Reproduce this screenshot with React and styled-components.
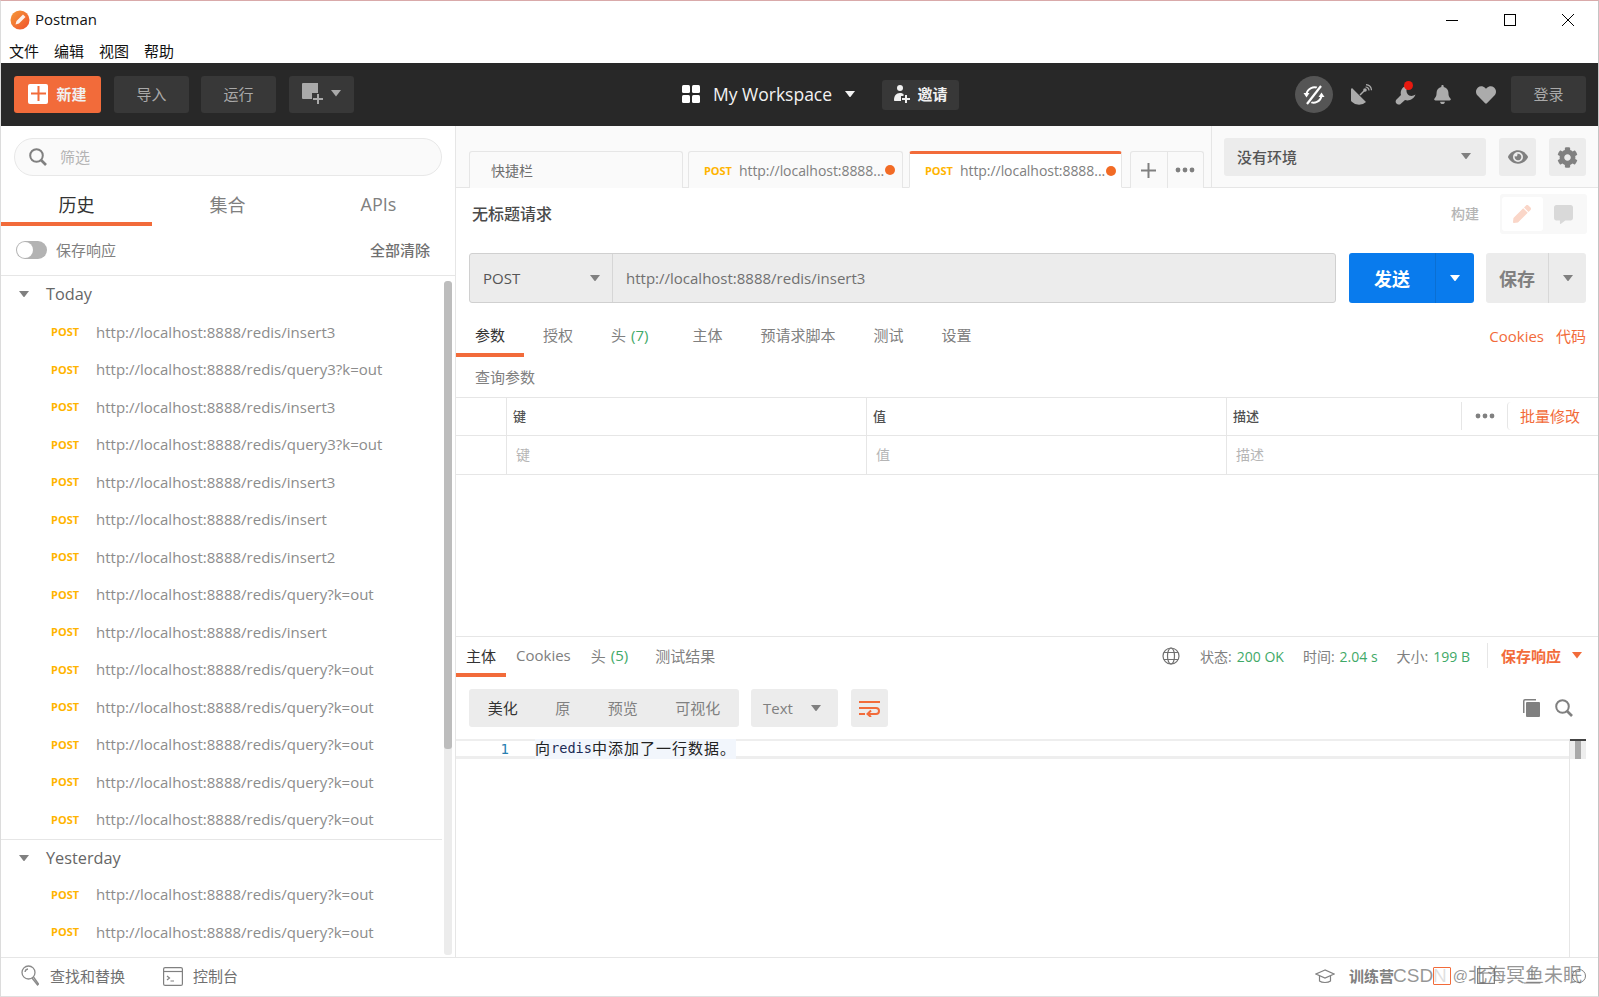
import styled, { createGlobalStyle } from 'styled-components'
import { FaBell, FaHeart, FaCog, FaEye, FaPen, FaCommentAlt } from 'react-icons/fa'

const FONT = `'Open Sans', 'Noto Sans CJK SC', sans-serif`
const ORANGE = '#f26b3a'
const GREEN = '#3fa968'
const LINE = '#e6e6e6'

const GlobalStyle = createGlobalStyle`
  html, body { margin: 0; padding: 0; background: #fff; }
  * { box-sizing: border-box; }
`

const Window = styled.div`
  width: 1599px;
  height: 997px;
  display: flex;
  flex-direction: column;
  overflow: hidden;
  font-family: ${FONT};
  color: #505050;
  background: #fff;
  border-top: 1px solid #d9aaaa;
  border-left: 1px solid #dcdcdc;
  border-right: 1px solid #c4c4c4;
  border-bottom: 1px solid #e0e0e0;
`

const TitleBar = styled.div`
  height: 37px;
  flex: none;
  display: flex;
  align-items: center;
  padding-left: 9px;
  gap: 5px;
  font-size: 15px;
  color: #111;
`

const TitleText = styled.span`
  padding-bottom: 2px;
`

const WindowControls = styled.div`
  margin-left: auto;
  display: flex;
  align-items: center;
  padding-right: 24px;
  gap: 46px;
  color: #000;
`

const MenuBar = styled.div`
  height: 25px;
  flex: none;
  display: flex;
  gap: 15px;
  padding: 3px 0 0 8px;
  font-size: 15px;
  line-height: 20px;
  color: #111;
`

const Header = styled.header`
  height: 63px;
  flex: none;
  display: flex;
  align-items: center;
  background: #282828;
  padding: 0 12px 0 13px;
`

const HeaderLeft = styled.div`
  width: 668px;
  display: flex;
  gap: 12px;
`

const HeaderBtn = styled.div`
  height: ${(p) => p.$h || 37}px;
  width: ${(p) => p.$w}px;
  margin-right: ${(p) => p.$mr || 0}px;
  display: flex;
  align-items: center;
  justify-content: center;
  gap: 8px;
  padding-bottom: 2px;
  border-radius: 3px;
  font-size: 15px;
  color: ${(p) => (p.$light ? '#f0f0f0' : '#a9a9a9')};
  background: ${(p) => (p.$primary ? ORANGE : '#383838')};
  font-weight: ${(p) => (p.$primary || p.$h ? 700 : 400)};
`

const PlusBox = styled.span`
  width: 20px;
  height: 20px;
  background: #fff;
  border-radius: 2px;
  display: flex;
  align-items: center;
  justify-content: center;
`

const WorkspaceName = styled.div`
  display: flex;
  align-items: center;
  color: #f2f2f2;
  font-size: 17.5px;
  gap: 13px;
  padding-bottom: 1px;
  margin-right: 27px;
`

const HeaderRight = styled.div`
  margin-left: auto;
  display: flex;
  align-items: center;
  color: #ababab;
`

const SyncCircle = styled.div`
  width: 38px;
  height: 37px;
  border-radius: 50%;
  background: #555;
  display: flex;
  align-items: center;
  justify-content: center;
  margin-right: 18px;
`

const HeaderIcon = styled.div`
  position: relative;
  width: ${(p) => p.$w}px;
  margin-right: ${(p) => p.$mr}px;
  display: flex;
  justify-content: center;
`

const RedDot = styled.span`
  position: absolute;
  top: -4px;
  right: 3px;
  width: 9px;
  height: 9px;
  border-radius: 50%;
  background: #e8190f;
`

const Body = styled.div`
  flex: 1;
  min-height: 0;
  display: flex;
`

const Sidebar = styled.aside`
  width: 455px;
  flex: none;
  display: flex;
  flex-direction: column;
  border-right: 1px solid ${LINE};
`

const SearchWrap = styled.div`
  margin: 12px 13px 0 13px;
  height: 38px;
  border: 1px solid #e8e8e8;
  border-radius: 19px;
  background: #fafafa;
  display: flex;
  align-items: center;
  padding-left: 14px;
  gap: 13px;
  font-size: 15px;
  color: #b4b4b4;
`

const SearchHint = styled.span`
  padding-bottom: 2px;
`

const SideTabs = styled.div`
  height: 50px;
  flex: none;
  display: flex;
`

const SideTab = styled.div`
  width: 151px;
  display: flex;
  align-items: center;
  justify-content: center;
  padding-top: 9px;
  font-size: 18px;
  color: ${(p) => (p.$active ? '#333' : '#808080')};
  border-bottom: 4px solid ${(p) => (p.$active ? ORANGE : 'transparent')};
`

const ToggleRow = styled.div`
  height: 50px;
  flex: none;
  display: flex;
  align-items: center;
  padding: 0 25px 1px 15px;
  font-size: 15px;
  color: #808080;
  border-bottom: 1px solid ${LINE};
`

const Toggle = styled.span`
  width: 31px;
  height: 18px;
  border-radius: 9px;
  background: #b3b3b3;
  margin-right: 9px;
  display: flex;
  align-items: center;
  padding-left: 1px;
  &::before {
    content: '';
    width: 16px;
    height: 16px;
    border-radius: 50%;
    background: #fff;
  }
`

const ToggleLabel = styled.span`
  padding-bottom: 2px;
`

const ClearAll = styled.span`
  margin-left: auto;
  padding-bottom: 2px;
  font-weight: 500;
  color: #707070;
`

const ListArea = styled.div`
  flex: 1;
  min-height: 0;
  display: flex;
  overflow: hidden;
`

const List = styled.div`
  width: 441px;
  flex: none;
`

const DayHeader = styled.div`
  height: 37.5px;
  display: flex;
  align-items: center;
  padding: 0 0 ${(p) => (p.$divided ? 0 : 2)}px 18px;
  gap: 17px;
  font-size: 16.300px;
  color: #666;
  border-top: ${(p) => (p.$divided ? `1px solid ${LINE}` : 'none')};
`

const HistoryRow = styled.div`
  height: 37.5px;
  display: flex;
  align-items: center;
  padding: 0 0 1px 50px;
  font-size: 15px;
  color: #8c8c8c;
`

const MethodTag = styled.span`
  width: 45px;
  flex: none;
  font-size: 11px;
  font-weight: 700;
  color: #ffb400;
`

const ScrollTrack = styled.div`
  width: 8px;
  margin: 5px 0 2px 2px;
  border-radius: 3px;
  background: #ececec;
  overflow: hidden;
`

const ScrollThumb = styled.div`
  height: 468px;
  background: #bdbdbd;
  border-radius: 3px;
`

const Main = styled.main`
  flex: 1;
  min-width: 0;
  display: flex;
  flex-direction: column;
`

const TabStrip = styled.div`
  height: 62px;
  flex: none;
  display: flex;
  background: #fafafa;
  border-bottom: 1px solid ${LINE};
`

const Tabs = styled.div`
  width: 755px;
  flex: none;
  display: flex;
  align-items: flex-end;
  padding-left: 13px;
  margin-bottom: -1px;
`

const QuickTab = styled.div`
  width: 214px;
  height: 37px;
  margin-right: 5px;
  display: flex;
  align-items: center;
  padding-left: 21px;
  font-size: 14px;
  color: #707070;
  background: #fafafa;
  border: 1px solid ${LINE};
  border-bottom: none;
  border-radius: 3px 3px 0 0;
`

const UrlTab = styled.div`
  width: ${(p) => (p.$active ? 213 : 215)}px;
  height: 37px;
  margin-right: ${(p) => (p.$active ? 8 : 6)}px;
  display: flex;
  align-items: center;
  padding: 0 6px 0 15px;
  font-size: 14px;
  letter-spacing: -0.05px;
  color: #808080;
  background: ${(p) => (p.$active ? '#fff' : '#fafafa')};
  border: 1px solid ${LINE};
  border-top: ${(p) => (p.$active ? `3px solid ${ORANGE}` : `1px solid ${LINE}`)};
  border-bottom: ${(p) => (p.$active ? '1px solid #fff' : 'none')};
  border-radius: 3px 3px 0 0;
`

const TabMethod = styled.span`
  font-size: 11px;
  font-weight: 700;
  color: #ffb400;
  margin-right: 7px;
`

const TabDot = styled.span`
  width: 10px;
  height: 10px;
  border-radius: 50%;
  background: #f26b25;
  margin-left: 1px;
  flex: none;
`

const TabTools = styled.div`
  width: 74px;
  height: 37px;
  display: flex;
  background: #fafafa;
  border: 1px solid ${LINE};
  border-bottom: none;
  border-radius: 3px 3px 0 0;
`

const TabTool = styled.div`
  flex: 1;
  display: flex;
  align-items: center;
  justify-content: center;
  color: #808080;
  & + & { border-left: 1px solid ${LINE}; }
`

const EnvArea = styled.div`
  flex: 1;
  border-left: 1px solid ${LINE};
  display: flex;
  padding: 12px 11px 0 12px;
  gap: 13px;
`

const EnvSelect = styled.div`
  width: 262px;
  height: 38px;
  background: #ececec;
  border-radius: 3px;
  display: flex;
  align-items: center;
  justify-content: space-between;
  padding: 0 15px 2px 13px;
  font-size: 15px;
  font-weight: 500;
  color: #555;
`

const EnvBtn = styled.div`
  width: 37px;
  height: 38px;
  background: #ececec;
  border-radius: 3px;
  display: flex;
  align-items: center;
  justify-content: center;
  color: #808080;
`

const TitleRow = styled.div`
  height: 65px;
  flex: none;
  display: flex;
  align-items: flex-start;
  padding: 6px 11px 0 16px;
`

const RequestName = styled.div`
  margin-top: 8px;
  font-size: 16px;
  font-weight: 500;
  line-height: 24px;
  color: #4a4a4a;
`

const BuildLabel = styled.div`
  margin: 9px 21px 0 auto;
  font-size: 14px;
  line-height: 22px;
  font-weight: 500;
  color: #b5b5b5;
`

const ModeGroup = styled.div`
  width: 87px;
  height: 40px;
  padding: 3px 2px;
  background: #f8f8f8;
  border-radius: 3px;
  display: flex;
`

const ModeCell = styled.div`
  width: 41px;
  display: flex;
  align-items: center;
  justify-content: center;
  border-radius: 3px;
  background: ${(p) => (p.$active ? '#fff' : 'transparent')};
  color: ${(p) => (p.$active ? '#fad6c8' : '#d9d9d9')};
  margin-right: 1px;
`

const UrlRow = styled.div`
  height: 50px;
  flex: none;
  display: flex;
  padding: 0 11px 0 13px;
`

const UrlBar = styled.div`
  width: 867px;
  display: flex;
  background: #ececec;
  border: 1px solid #d0d0d0;
  border-radius: 3px;
  font-size: 15px;
  color: #707070;
`

const MethodSelect = styled.div`
  width: 143px;
  flex: none;
  display: flex;
  align-items: center;
  justify-content: space-between;
  padding: 0 12px 0 13px;
  border-right: 1px solid #d6d6d6;
  color: #555;
`

const UrlText = styled.div`
  display: flex;
  align-items: center;
  padding-left: 13px;
`

const SplitBtn = styled.div`
  width: ${(p) => p.$w}px;
  margin-left: ${(p) => p.$ml}px;
  display: flex;
  border-radius: 3px;
  background: ${(p) => (p.$blue ? '#097bed' : '#ececec')};
  color: ${(p) => (p.$blue ? '#fff' : '#808080')};
  font-size: 18px;
  font-weight: 700;
`

const SplitMain = styled.div`
  flex: 1;
  display: flex;
  align-items: center;
  justify-content: center;
`

const SplitSide = styled.div`
  width: ${(p) => p.$w}px;
  display: flex;
  align-items: center;
  justify-content: center;
  border-left: 1px solid ${(p) => (p.$blue ? '#0a6fd3' : '#d8d8d8')};
`

const TabRow = styled.div`
  height: 54px;
  flex: none;
  display: flex;
  align-items: flex-end;
`

const ReqTab = styled.div`
  height: 54px;
  display: flex;
  align-items: center;
  padding: 13px 19px 0;
  margin-right: ${(p) => p.$mr || 0}px;
  font-size: 15px;
  white-space: nowrap;
  color: ${(p) => (p.$active ? '#333' : '#808080')};
  border-bottom: 4px solid ${(p) => (p.$active ? ORANGE : 'transparent')};
`

const Count = styled.span`
  color: ${GREEN};
  margin-left: 5px;
`

const TabLinks = styled.div`
  margin-left: auto;
  align-self: flex-start;
  padding: 23px 12px 0 0;
  display: flex;
  gap: 12px;
  font-size: 15px;
  line-height: 20px;
  color: ${ORANGE};
`

const SectionLabel = styled.div`
  height: 40px;
  flex: none;
  display: flex;
  align-items: center;
  padding: 0 0 2px 19px;
  font-size: 15px;
  color: #808080;
`

const ParamRow = styled.div`
  height: ${(p) => p.$h}px;
  flex: none;
  display: grid;
  grid-template-columns: 50px 360px 360px 1fr;
  border-top: 1px solid ${LINE};
  border-bottom: ${(p) => (p.$last ? `1px solid ${LINE}` : 'none')};
`

const ParamCell = styled.div`
  display: flex;
  align-items: center;
  padding: 0 0 2px ${(p) => (p.$head ? 6 : 9)}px;
  font-weight: ${(p) => (p.$head ? 500 : 400)};
  font-size: ${(p) => (p.$head ? 13 : 14)}px;
  color: ${(p) => (p.$head ? '#505050' : '#b5b5b5')};
  & + & { border-left: 1px solid ${LINE}; }
`

const ParamTools = styled.div`
  margin-left: auto;
  height: 28px;
  display: flex;
  align-items: center;
  color: #808080;
`

const MoreTools = styled.span`
  width: 46px;
  height: 28px;
  display: flex;
  align-items: center;
  justify-content: center;
  border-left: 1px solid ${LINE};
`

const BulkEdit = styled.span`
  width: 91px;
  padding-left: 12px;
  height: 28px;
  display: flex;
  align-items: center;
  font-size: 15px;
  font-weight: 400;
  color: ${ORANGE};
  border-left: 1px solid ${LINE};
  border-radius: 4px 0 0 4px;
`

const Spacer = styled.div`
  flex: 1;
`

const Response = styled.section`
  height: 321px;
  flex: none;
  display: flex;
  flex-direction: column;
  border-top: 1px solid ${LINE};
`

const RespTop = styled.div`
  height: 40px;
  flex: none;
  display: flex;
  align-items: flex-end;
`

const RespTab = styled.div`
  height: 40px;
  display: flex;
  align-items: center;
  padding: 0 10px;
  margin-right: ${(p) => p.$mr || 0}px;
  font-size: 15px;
  white-space: nowrap;
  color: ${(p) => (p.$active ? '#333' : '#808080')};
  border-bottom: 4px solid ${(p) => (p.$active ? ORANGE : 'transparent')};
`

const Status = styled.div`
  margin-left: auto;
  align-self: stretch;
  display: flex;
  align-items: center;
  padding: 0 16px 3px 0;
  font-size: 14px;
  color: #808080;
`

const Metric = styled.span`
  margin-left: ${(p) => p.$ml}px;
  white-space: nowrap;
`

const MetricValue = styled.span`
  color: ${GREEN};
  margin-left: 5px;
  font-size: 14px;
`

const SaveResp = styled.div`
  margin-left: 17px;
  padding-left: 13px;
  height: 25px;
  display: flex;
  align-items: center;
  gap: 11px;
  font-size: 15px;
  font-weight: 700;
  color: ${ORANGE};
  border-left: 1px solid ${LINE};
`

const RespTools = styled.div`
  height: 38px;
  margin-top: 12px;
  flex: none;
  display: flex;
  padding: 0 25px 0 13px;
`

const Segment = styled.div`
  display: flex;
  align-items: center;
  height: 38px;
  padding-bottom: 2px;
  border-radius: 3px;
  background: #ececec;
  font-size: 15px;
`

const SegItem = styled.span`
  padding: 0 18.750px;
  color: ${(p) => (p.$active ? '#333' : '#808080')};
`

const TextSelect = styled.div`
  margin-left: 12px;
  width: 87px;
  height: 38px;
  padding: 0 17px 0 12px;
  border-radius: 3px;
  background: #ececec;
  display: flex;
  align-items: center;
  justify-content: space-between;
  font-size: 15px;
  color: #808080;
`

const WrapBtn = styled.div`
  margin-left: 13px;
  width: 37px;
  height: 38px;
  border-radius: 3px;
  background: #ececec;
  display: flex;
  align-items: center;
  justify-content: center;
`

const RespIcons = styled.div`
  margin-left: auto;
  display: flex;
  align-items: center;
  gap: 15px;
  color: #808080;
`

const CodeArea = styled.div`
  flex: 1;
  min-height: 0;
  margin-top: 12px;
  display: flex;
  align-items: flex-start;
  padding-right: 12px;
`

const CodeLine = styled.div`
  flex: 1;
  height: 20px;
  display: flex;
  align-items: center;
  border-top: 2px solid #eeeeee;
  border-bottom: 3px solid #eeeeee;
`

const LineNo = styled.span`
  width: 79px;
  flex: none;
  text-align: right;
  padding-right: 26px;
  font-family: 'DejaVu Sans Mono', monospace;
  font-size: 14px;
  color: #2a7fb0;
`

const Code = styled.span`
  width: 201px;
  height: 20px;
  margin: -2px 0 -3px 0;
  padding-bottom: 4px;
  background: #f2f6fc;
  display: flex;
  align-items: center;
  font-size: 15px;
  letter-spacing: 1px;
  color: #222;
`

const CodeLatin = styled.span`
  padding-top: 2px;
  font-family: 'DejaVu Sans Mono', monospace;
  font-size: 13.600px;
  letter-spacing: 0;
  color: #1c2b55;
`

const CodeScroll = styled.div`
  width: 17px;
  flex: none;
  align-self: stretch;
  border-left: 1px solid ${LINE};
`

const CodeScrollHead = styled.div`
  height: 20px;
  background: #eee;
  border-top: 2px solid #444;
  display: flex;
  justify-content: center;
`

const CodeScrollThumb = styled.div`
  width: 6px;
  background: #aaa;
`

const BottomBar = styled.footer`
  position: relative;
  height: 39px;
  flex: none;
  display: flex;
  align-items: center;
  padding: 0 12px 2px 20px;
  font-size: 15px;
  color: #707070;
  border-top: 1px solid ${LINE};
`

const BottomItem = styled.div`
  display: flex;
  align-items: center;
  gap: ${(p) => p.$gap}px;
  margin-right: ${(p) => p.$mr || 0}px;
`

const BottomText = styled.span`
  padding-bottom: 2px;
`

const BottomRight = styled.div`
  margin-left: auto;
  display: flex;
  align-items: center;
  color: #808080;
`

const CampLabel = styled.span`
  margin: 0 83px 0 14px;
  padding-bottom: 2px;
  font-size: 15px;
  font-weight: 700;
`

const Watermark = styled.div`
  position: absolute;
  left: 1392px;
  top: 6px;
  display: flex;
  align-items: center;
  font-family: 'Liberation Sans', 'Noto Sans CJK SC', sans-serif;
  font-size: 19px;
  line-height: 24px;
  color: rgba(110, 110, 110, 0.72);
  white-space: nowrap;
`

const WatermarkBox = styled.span`
  width: 18px;
  height: 18px;
  margin: 0 2px 0 -14px;
  background: rgba(255, 255, 255, 0.7);
  border: 1px solid ${ORANGE};
  border-radius: 1px;
`

const WatermarkAt = styled.span`
  font-size: 15px;
`

const HelpRing = styled.span`
  width: 14px;
  height: 14px;
  margin-left: 31px;
  border: 1px solid #808080;
  border-radius: 50%;
`

const Caret = ({ size = 10, color = '#808080' }) => (
  <svg width={size} height={size * 0.65} viewBox="0 0 10 6.5">
    <path d="M0 0h10L5 6.5z" fill={color} />
  </svg>
)

const Dots = () => (
  <svg width="20" height="6" viewBox="0 0 20 6" fill="currentColor">
    <circle cx="3" cy="3" r="2.4" />
    <circle cx="10" cy="3" r="2.4" />
    <circle cx="17" cy="3" r="2.4" />
  </svg>
)

const PostmanLogo = () => (
  <svg width="20" height="20" viewBox="0 0 20 20">
    <defs>
      <linearGradient id="pm" x1="0" y1="0" x2="1" y2="1">
        <stop offset="0" stopColor="#f59a3a" />
        <stop offset="1" stopColor="#f0502a" />
      </linearGradient>
    </defs>
    <circle cx="10" cy="10" r="9.5" fill="url(#pm)" />
    <path d="M13 4.5l2.5 2.5-6.5 6.5-3.5 1 1-3.5z" fill="#fff" opacity="0.9" />
  </svg>
)

const SyncOff = () => (
  <svg width="22" height="22" viewBox="0 0 22 22" fill="none" stroke="#fff" strokeWidth="2">
    <path d="M15.500 4.500A8 8 0 0 0 3.500 10" />
    <path d="M0.500 9h6l-3 4.500z" fill="#fff" stroke="none" />
    <path d="M6.500 17.500A8 8 0 0 0 18.500 12" />
    <path d="M21.500 13h-6l3-4.500z" fill="#fff" stroke="none" />
    <path d="M18 2L4 20" stroke="#555" strokeWidth="4.500" />
    <path d="M18 2L4 20" strokeWidth="2.200" />
  </svg>
)

const SatelliteIcon = () => (
  <svg width="21" height="21" viewBox="0 0 21 21" fill="#ababab">
    <path d="M1 4l14 14A9.900 9.900 0 0 1 1 4z" />
    <path d="M9 11l4.500-4.500" stroke="#ababab" strokeWidth="1.500" />
    <circle cx="14" cy="6" r="1.800" />
    <path d="M14.500 3a3.500 3.500 0 0 1 3.500 3.500M15 0.700a6 6 0 0 1 5.500 5.500" fill="none" stroke="#ababab" strokeWidth="1.200" />
  </svg>
)

const WrenchIcon = () => (
  <svg width="21" height="20" viewBox="0 0 21 20" fill="#ababab">
    <path d="M11 1C7 2 5 6 6 10L1 15C0 17 1 19 3 19.500L5 19.500L10 15C14 16.500 19 14 20.500 9.500C18 11.500 14 11.500 12.500 9C11 7 11 4 13 1.500z" />
  </svg>
)

const WorkspaceGrid = () => (
  <svg width="18" height="18" viewBox="0 0 18 18" fill="#fff">
    <rect width="8" height="8" rx="1.5" />
    <rect x="10" width="8" height="8" rx="1.5" />
    <rect y="10" width="8" height="8" rx="1.5" />
    <rect x="10" y="10" width="8" height="8" rx="1.5" />
  </svg>
)

const NewWindowIcon = () => (
  <svg width="21" height="21" viewBox="0 0 21 21">
    <path d="M1 0h15v10h-6v6H1a1 1 0 0 1-1-1V1a1 1 0 0 1 1-1z" fill="#a9a9a9" />
    <path d="M15 11v4h-4v2h4v4h2v-4h4v-2h-4v-4z" fill="#a9a9a9" />
  </svg>
)

const InviteIcon = () => (
  <svg width="16" height="18" viewBox="0 0 16 18" fill="#f0f0f0">
    <circle cx="6" cy="3" r="3" />
    <path d="M1 16c-.6 0-1-.4-1-1 0-4 2-7 6-7 1.5 0 2.700.4 3.500 1.100V11H7v5z" />
    <path d="M11 10h2v3h3v2h-3v3h-2v-3H8v-2h3z" />
  </svg>
)

const WrapIcon = () => (
  <svg width="21" height="17" viewBox="0 0 21 17" fill="none" stroke={ORANGE} strokeWidth="2">
    <path d="M0 2h21" />
    <path d="M0 8h17a3 3 0 0 1 0 6H9" />
    <path d="M12 10.500L8.500 14l3.500 3" />
    <path d="M0 14h6" />
  </svg>
)

const CopyIcon = () => (
  <svg width="18" height="18" viewBox="0 0 18 18" fill="#808080">
    <path d="M1 14V2a2 2 0 0 1 2-2h11v1.500H3A.5.5 0 0 0 2.500 2v12z" />
    <rect x="4" y="3" width="14" height="15" rx="1" />
  </svg>
)

const SearchIcon = ({ size = 18 }) => (
  <svg width={size} height={size} viewBox="0 0 18 18" fill="none" stroke="#808080" strokeWidth="2">
    <circle cx="7.500" cy="7.500" r="6.300" />
    <path d="M12 12l5 5" strokeWidth="2.600" />
  </svg>
)

const Globe = () => (
  <svg width="18" height="18" viewBox="0 0 18 18" fill="none" stroke="#707070" strokeWidth="1.200">
    <circle cx="9" cy="9" r="8" />
    <ellipse cx="9" cy="9" rx="3.500" ry="8" />
    <path d="M1.800 5.500h14.400M1.800 12.500h14.400" />
  </svg>
)

const LoupeIcon = () => (
  <svg width="18" height="22" viewBox="0 0 18 22" fill="none" stroke="#8a8a8a" strokeWidth="1.300">
    <circle cx="7.500" cy="7.500" r="6.500" />
    <path d="M4 7a3.500 3.500 0 0 1 3-3" />
    <path d="M11 13l5.500 7 1-1-5-7" />
  </svg>
)

const ConsoleIcon = () => (
  <svg width="20" height="19" viewBox="0 0 20 19" fill="none" stroke="#808080" strokeWidth="1.200">
    <rect x="0.600" y="0.600" width="18.800" height="17.800" rx="1.500" />
    <path d="M0.600 4.500h18.800" />
    <path d="M4 9l2.500 2L4 13M7.500 14H11" />
  </svg>
)

const HatIcon = () => (
  <svg width="20" height="15" viewBox="0 0 20 15" fill="none" stroke="#808080" strokeWidth="1.200">
    <path d="M10 1L1 5l9 4 9-4z" />
    <path d="M4.500 7v5c2.500 2 8.500 2 11 0V7" />
  </svg>
)

const BrowseIcon = () => (
  <svg width="18" height="16" viewBox="0 0 18 16" fill="none" stroke="#808080" strokeWidth="1.200">
    <rect x="0.600" y="0.600" width="16.800" height="14.800" />
    <path d="M0.600 5h16.800M6 5v10.400" />
  </svg>
)

const PaneIcon = () => (
  <svg width="18" height="16" viewBox="0 0 18 16" fill="none" stroke="#808080" strokeWidth="1.200" style={{ marginLeft: 28 }}>
    <path d="M0.600 15h16.800M9 1v10M4 11h10" />
  </svg>
)

const today = [
  'insert3', 'query3?k=out', 'insert3', 'query3?k=out', 'insert3', 'insert', 'insert2',
  'query?k=out', 'insert', 'query?k=out', 'query?k=out', 'query?k=out', 'query?k=out', 'query?k=out',
]
const yesterday = ['query?k=out', 'query?k=out']

const History = ({ items }) =>
  items.map((path, i) => (
    <HistoryRow key={i}>
      <MethodTag>POST</MethodTag>
      http://localhost:8888/redis/{path}
    </HistoryRow>
  ))

export default function App() {
  return (
    <Window>
      <GlobalStyle />
      <TitleBar>
        <PostmanLogo />
        <TitleText>Postman</TitleText>
        <WindowControls>
          <svg width="12" height="12" viewBox="0 0 12 12"><path d="M0 6.500h12" stroke="#000" /></svg>
          <svg width="12" height="12" viewBox="0 0 12 12"><rect x="0.500" y="0.500" width="11" height="11" fill="none" stroke="#000" /></svg>
          <svg width="12" height="12" viewBox="0 0 12 12"><path d="M0 0l12 12M12 0L0 12" stroke="#000" /></svg>
        </WindowControls>
      </TitleBar>
      <MenuBar>
        <span>文件</span>
        <span>编辑</span>
        <span>视图</span>
        <span>帮助</span>
      </MenuBar>

      <Header>
        <HeaderLeft>
          <HeaderBtn $w={87} $mr={1} $primary $light>
            <PlusBox>
              <svg width="15" height="15" viewBox="0 0 15 15"><path d="M6.500 0h2v6.500H15v2H8.500V15h-2V8.500H0v-2h6.500z" fill={ORANGE} /></svg>
            </PlusBox>
            新建
          </HeaderBtn>
          <HeaderBtn $w={75}>导入</HeaderBtn>
          <HeaderBtn $w={75} $mr={1}>运行</HeaderBtn>
          <HeaderBtn $w={65}>
            <NewWindowIcon />
            <Caret color="#a9a9a9" />
          </HeaderBtn>
        </HeaderLeft>
        <WorkspaceName>
          <WorkspaceGrid />
          My Workspace
          <Caret color="#f2f2f2" />
        </WorkspaceName>
        <HeaderBtn $w={77} $h={30} $light>
          <InviteIcon />
          邀请
        </HeaderBtn>
        <HeaderRight>
          <SyncCircle>
            <SyncOff />
          </SyncCircle>
          <HeaderIcon $w={21} $mr={23}>
            <SatelliteIcon />
          </HeaderIcon>
          <HeaderIcon $w={21} $mr={18}>
            <WrenchIcon />
            <RedDot />
          </HeaderIcon>
          <HeaderIcon $w={17} $mr={25}>
            <FaBell size={19} />
          </HeaderIcon>
          <HeaderIcon $w={20} $mr={15}>
            <FaHeart size={20} />
          </HeaderIcon>
          <HeaderBtn $w={75}>登录</HeaderBtn>
        </HeaderRight>
      </Header>

      <Body>
        <Sidebar>
          <SearchWrap>
            <SearchIcon />
            <SearchHint>筛选</SearchHint>
          </SearchWrap>
          <SideTabs>
            <SideTab $active>历史</SideTab>
            <SideTab>集合</SideTab>
            <SideTab>APIs</SideTab>
          </SideTabs>
          <ToggleRow>
            <Toggle />
            <ToggleLabel>保存响应</ToggleLabel>
            <ClearAll>全部清除</ClearAll>
          </ToggleRow>
          <ListArea>
            <List>
              <DayHeader>
                <Caret />
                Today
              </DayHeader>
              <History items={today} />
              <DayHeader $divided>
                <Caret />
                Yesterday
              </DayHeader>
              <History items={yesterday} />
            </List>
            <ScrollTrack>
              <ScrollThumb />
            </ScrollTrack>
          </ListArea>
        </Sidebar>

        <Main>
          <TabStrip>
            <Tabs>
              <QuickTab>快捷栏</QuickTab>
              <UrlTab>
                <TabMethod>POST</TabMethod>
                http://localhost:8888...
                <TabDot />
              </UrlTab>
              <UrlTab $active>
                <TabMethod>POST</TabMethod>
                http://localhost:8888...
                <TabDot />
              </UrlTab>
              <TabTools>
                <TabTool>
                  <svg width="15" height="15" viewBox="0 0 15 15"><path d="M6.500 0h2v6.500H15v2H8.500V15h-2V8.500H0v-2h6.500z" fill="#808080" /></svg>
                </TabTool>
                <TabTool>
                  <Dots />
                </TabTool>
              </TabTools>
            </Tabs>
            <EnvArea>
              <EnvSelect>
                没有环境
                <Caret />
              </EnvSelect>
              <EnvBtn>
                <FaEye size={20} />
              </EnvBtn>
              <EnvBtn>
                <FaCog size={21} />
              </EnvBtn>
            </EnvArea>
          </TabStrip>

          <TitleRow>
            <RequestName>无标题请求</RequestName>
            <BuildLabel>构建</BuildLabel>
            <ModeGroup>
              <ModeCell $active>
                <FaPen size={18} />
              </ModeCell>
              <ModeCell>
                <FaCommentAlt size={19} />
              </ModeCell>
            </ModeGroup>
          </TitleRow>

          <UrlRow>
            <UrlBar>
              <MethodSelect>
                POST
                <Caret />
              </MethodSelect>
              <UrlText>http://localhost:8888/redis/insert3</UrlText>
            </UrlBar>
            <SplitBtn $w={125} $ml={13} $blue>
              <SplitMain>发送</SplitMain>
              <SplitSide $w={39} $blue>
                <Caret color="#fff" />
              </SplitSide>
            </SplitBtn>
            <SplitBtn $w={100} $ml={12}>
              <SplitMain>保存</SplitMain>
              <SplitSide $w={38}>
                <Caret />
              </SplitSide>
            </SplitBtn>
          </UrlRow>

          <TabRow>
            <ReqTab $active>参数</ReqTab>
            <ReqTab>授权</ReqTab>
            <ReqTab $mr={6}>
              头<Count>(7)</Count>
            </ReqTab>
            <ReqTab>主体</ReqTab>
            <ReqTab>预请求脚本</ReqTab>
            <ReqTab>测试</ReqTab>
            <ReqTab>设置</ReqTab>
            <TabLinks>
              <span>Cookies</span>
              <span>代码</span>
            </TabLinks>
          </TabRow>
          <SectionLabel>查询参数</SectionLabel>
          <ParamRow $h={38}>
            <ParamCell />
            <ParamCell $head>键</ParamCell>
            <ParamCell $head>值</ParamCell>
            <ParamCell $head>
              描述
              <ParamTools>
                <MoreTools>
                  <Dots />
                </MoreTools>
                <BulkEdit>批量修改</BulkEdit>
              </ParamTools>
            </ParamCell>
          </ParamRow>
          <ParamRow $h={40} $last>
            <ParamCell />
            <ParamCell>键</ParamCell>
            <ParamCell>值</ParamCell>
            <ParamCell>描述</ParamCell>
          </ParamRow>
          <Spacer />

          <Response>
            <RespTop>
              <RespTab $active>主体</RespTab>
              <RespTab>Cookies</RespTab>
              <RespTab $mr={7}>
                头<Count>(5)</Count>
              </RespTab>
              <RespTab>测试结果</RespTab>
              <Status>
                <Globe />
                <Metric $ml={20}>
                  状态:<MetricValue>200 OK</MetricValue>
                </Metric>
                <Metric $ml={19}>
                  时间:<MetricValue>2.04 s</MetricValue>
                </Metric>
                <Metric $ml={19}>
                  大小:<MetricValue>199 B</MetricValue>
                </Metric>
                <SaveResp>
                  保存响应
                  <Caret color={ORANGE} />
                </SaveResp>
              </Status>
            </RespTop>
            <RespTools>
              <Segment>
                <SegItem $active>美化</SegItem>
                <SegItem>原</SegItem>
                <SegItem>预览</SegItem>
                <SegItem>可视化</SegItem>
              </Segment>
              <TextSelect>
                Text
                <Caret />
              </TextSelect>
              <WrapBtn>
                <WrapIcon />
              </WrapBtn>
              <RespIcons>
                <CopyIcon />
                <SearchIcon />
              </RespIcons>
            </RespTools>
            <CodeArea>
              <CodeLine>
                <LineNo>1</LineNo>
                <Code>
                  向<CodeLatin>redis</CodeLatin>中添加了一行数据。
                </Code>
              </CodeLine>
              <CodeScroll>
                <CodeScrollHead>
                  <CodeScrollThumb />
                </CodeScrollHead>
              </CodeScroll>
            </CodeArea>
          </Response>
        </Main>
      </Body>

      <BottomBar>
        <BottomItem $gap={11} $mr={38}>
          <LoupeIcon />
          <BottomText>查找和替换</BottomText>
        </BottomItem>
        <BottomItem $gap={10}>
          <ConsoleIcon />
          <BottomText>控制台</BottomText>
        </BottomItem>
        <BottomRight>
          <HatIcon />
          <CampLabel>训练营</CampLabel>
          <BrowseIcon />
          <PaneIcon />
          <HelpRing />
        </BottomRight>
        <Watermark>
          CSDN
          <WatermarkBox />
          <WatermarkAt>@</WatermarkAt>北海冥鱼未眠
        </Watermark>
      </BottomBar>
    </Window>
  )
}
